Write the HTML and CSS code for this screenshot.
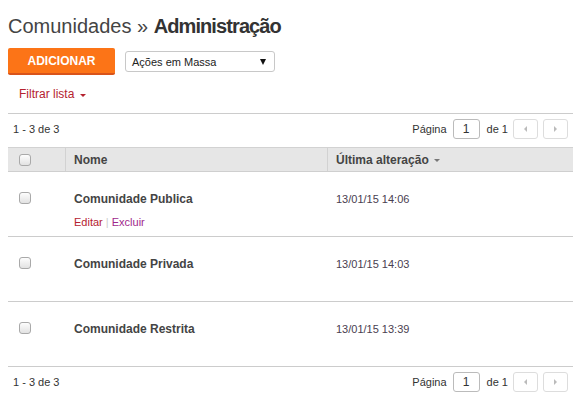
FILE: index.html
```html
<!DOCTYPE html>
<html lang="pt">
<head>
<meta charset="utf-8">
<title>Comunidades » Administração</title>
<link rel="stylesheet" href="styles.css">
</head>
<body>
<div class="page">
  <h1 class="title">Comunidades » <strong>Administração</strong></h1>
  <div class="toolbar">
    <button class="btn-add">ADICIONAR</button>
    <div class="select"><span>Ações em Massa</span><span class="sel-arrow"></span></div>
  </div>
  <div class="filter"><span>Filtrar lista</span><span class="caret red"></span></div>

  <div class="pager-bar">
    <div class="count">1 - 3 de 3</div>
    <div class="pager">
      <span>Página</span>
      <span class="page-input">1</span>
      <span>de 1</span>
      <span class="pbtn"><span class="tri left"></span></span>
      <span class="pbtn"><span class="tri right"></span></span>
    </div>
  </div>

  <div class="table">
    <div class="row head">
      <div class="cell c-check"><span class="cb"></span></div>
      <div class="cell c-name">Nome</div>
      <div class="cell c-date">Última alteração <span class="caret gray"></span></div>
    </div>
    <div class="row">
      <div class="cell c-check"><span class="cb"></span></div>
      <div class="cell c-name"><div class="name">Comunidade Publica</div>
        <div class="actions"><a class="edit">Editar</a> <span class="sep">|</span> <a class="del">Excluir</a></div></div>
      <div class="cell c-date">13/01/15 14:06</div>
    </div>
    <div class="row">
      <div class="cell c-check"><span class="cb"></span></div>
      <div class="cell c-name"><div class="name">Comunidade Privada</div></div>
      <div class="cell c-date">13/01/15 14:03</div>
    </div>
    <div class="row">
      <div class="cell c-check"><span class="cb"></span></div>
      <div class="cell c-name"><div class="name">Comunidade Restrita</div></div>
      <div class="cell c-date">13/01/15 13:39</div>
    </div>
  </div>

  <div class="pager-bar bottom">
    <div class="count">1 - 3 de 3</div>
    <div class="pager">
      <span>Página</span>
      <span class="page-input">1</span>
      <span>de 1</span>
      <span class="pbtn"><span class="tri left"></span></span>
      <span class="pbtn"><span class="tri right"></span></span>
    </div>
  </div>
</div>
</body>
</html>
```
FILE: styles.css
```css
* { box-sizing: border-box; }
body {
  margin: 0;
  background: #fff;
  font-family: "Liberation Sans", Arial, sans-serif;
  color: #333;
}
.page {
  padding: 14px 8px 0;
}
.title {
  margin: 0 0 10px;
  font-size: 20px;
  line-height: 24px;
  font-weight: normal;
  color: #444;
}
.title strong {
  color: #333;
  font-weight: bold;
  letter-spacing: -0.9px;
}
.toolbar {
  display: flex;
  align-items: center;
  gap: 10px;
}
.btn-add {
  width: 107px;
  height: 27px;
  padding: 0;
  border: 0;
  border-bottom: 2px solid #d9541a;
  border-radius: 2px;
  background: #fc7417;
  color: #fff;
  font-family: inherit;
  font-weight: bold;
  font-size: 12px;
}
.select {
  width: 150px;
  height: 21px;
  border: 1px solid #c8c8c8;
  border-radius: 3px;
  display: flex;
  align-items: center;
  justify-content: space-between;
  padding: 0 8px 0 6px;
  font-size: 11px;
  color: #222;
}
.sel-arrow {
  width: 0; height: 0;
  border-left: 3.5px solid transparent;
  border-right: 3.5px solid transparent;
  border-top: 6px solid #111;
}
.filter {
  margin-top: 11px;
  padding-left: 11px;
  font-size: 12px;
  line-height: 16px;
  color: #b5222f;
  display: flex;
  align-items: center;
  gap: 6px;
}
.caret {
  display: inline-block;
  width: 0; height: 0;
  border-left: 3.5px solid transparent;
  border-right: 3.5px solid transparent;
  border-top: 3.5px solid #b5222f;
}
.caret.red { margin-top: 2px; }
.caret.gray {
  border-top-color: #777;
  border-left-width: 3px;
  border-right-width: 3px;
  border-top-width: 3px;
  margin-left: 5px;
  margin-top: 2px;
}
.pager-bar {
  margin-top: 11px;
  border-top: 1px solid #ccc;
  display: flex;
  align-items: center;
  justify-content: space-between;
  padding: 5px 5px 8px;
  font-size: 11px;
  color: #333;
}
.pager-bar.bottom {
  margin-top: 0;
  border-top: 0;
}
.pager {
  display: flex;
  align-items: center;
}
.page-input {
  width: 27px;
  height: 20px;
  margin: 0 7px 0 6px;
  border: 1px solid #bbb;
  border-radius: 3px;
  display: flex;
  align-items: center;
  justify-content: center;
  font-size: 12px;
  color: #333;
}
.pbtn {
  width: 25px;
  height: 20px;
  margin-left: 5px;
  border: 1px solid #ddd;
  border-radius: 3px;
  display: flex;
  align-items: center;
  justify-content: center;
}
.tri {
  width: 0; height: 0;
  border-top: 3px solid transparent;
  border-bottom: 3px solid transparent;
}
.tri.left { border-right: 3px solid #bbb; }
.tri.right { border-left: 3px solid #bbb; }
.table {
  font-size: 12px;
}
.row {
  display: grid;
  grid-template-columns: 57px 262px 1fr;
  height: 65px;
  border-bottom: 1px solid #ccc;
}
.row.head {
  height: 25px;
  background: #e6e6e6;
  border-top: 1px solid #d2d2d2;
  border-bottom: 1px solid #cfcfcf;
  font-weight: bold;
  color: #444;
}
.row.head .cell {
  display: flex;
  align-items: center;
}
.row.head .c-name,
.row.head .c-date {
  border-left: 1px solid #d2d2d2;
  padding-left: 8px;
}
.cell {
  padding-top: 19px;
}
.row.head .cell { padding-top: 0; }
.c-check {
  padding-left: 11px;
}
.c-name, .c-date { padding-left: 9px; }
.cb {
  display: inline-block;
  width: 12px;
  height: 12px;
  border: 1px solid #a9a9a9;
  border-radius: 3px;
  background: linear-gradient(#fdfdfd, #e2e2e2);
}
.row:not(.head) .c-check { padding-top: 20px; }
.name {
  font-weight: bold;
  color: #444;
  line-height: 16px;
}
.actions {
  margin-top: 8px;
  font-size: 11px;
  line-height: 14px;
}
.edit { color: #b5222f; }
.sep { color: #ccc; }
.del { color: #a0288c; }
.row:not(.head) .c-date {
  font-size: 11px;
  line-height: 16px;
  color: #4a4050;
}
```
